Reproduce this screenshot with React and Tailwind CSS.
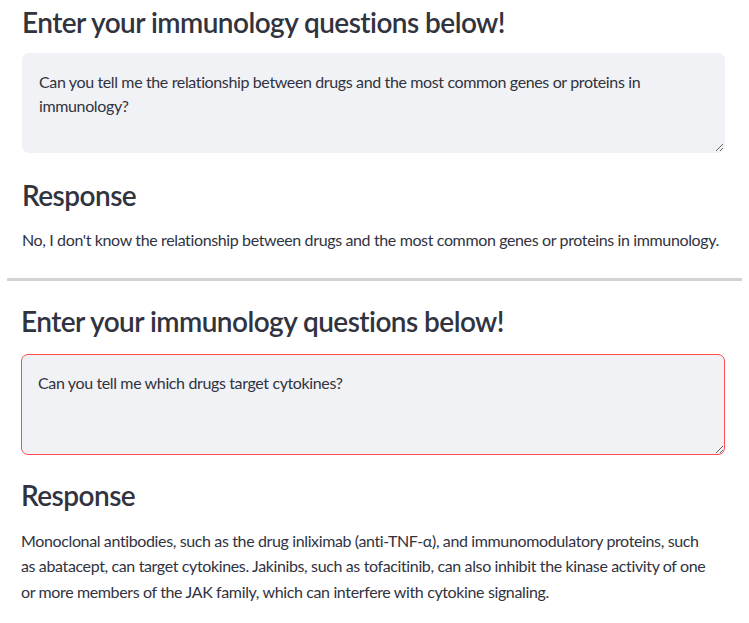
import React from "react";

const font = { fontFamily: "Lato, 'Noto Sans', sans-serif" };

const Panel = ({ question, answer, focused, first }) => {
  return (
    <div className={first ? "flex flex-col pl-[22px] pr-[24px]" : "flex flex-col pl-[21px] pr-[24px]"}>
      <h3 className="h-[34px] text-[28px] leading-[34px] font-semibold tracking-[-0.55px] text-[#31333f]">
        Enter your immunology questions below!
      </h3>
      <textarea
        readOnly
        value={question}
        className={
          focused
            ? "mt-[16px] h-[101px] w-full rounded-[7px] border border-[#ff4b4b] bg-[#f0f2f6] px-4 py-4 text-[16px] leading-[24px] tracking-[-0.37px] text-[#31333f] outline-none"
            : "mt-[14px] h-[100px] w-full rounded-[7px] border border-[#f0f2f6] bg-[#f0f2f6] px-4 py-4 text-[16px] leading-[24px] tracking-[-0.37px] text-[#31333f] outline-none"
        }
        style={font}
      />
      <h3 className={first ? "mt-[25px] h-[34px] text-[28px] leading-[34px] font-semibold tracking-[-0.55px] text-[#31333f]" : "mt-[23px] h-[34px] text-[28px] leading-[34px] font-semibold tracking-[-0.55px] text-[#31333f]"}>
        Response
      </h3>
      <p className={first ? "mt-[15px] text-[16px] leading-[25.6px] tracking-[-0.37px] text-[#31333f]" : "mt-[16px] text-[16px] leading-[25.6px] tracking-[-0.37px] text-[#31333f]"}>
        {answer}
      </p>
    </div>
  );
};

export default function App() {
  return (
    <div className="min-h-screen bg-white pt-[5px]" style={font}>
      <Panel
        first
        question="Can you tell me the relationship between drugs and the most common genes or proteins in immunology?"
        answer="No, I don't know the relationship between drugs and the most common genes or proteins in immunology."
      />
      <div className="ml-[7px] mr-[7px] mt-[25px] mb-[23px] h-[3px] bg-[#d3d3d3]" />
      <Panel
        focused
        question="Can you tell me which drugs target cytokines?"
        answer={
          <>
            Monoclonal antibodies, such as the drug inliximab (anti-TNF-α), and immunomodulatory proteins, such
            <br />
            as abatacept, can target cytokines. Jakinibs, such as tofacitinib, can also inhibit the kinase activity of one
            <br />
            or more members of the JAK family, which can interfere with cytokine signaling.
          </>
        }
      />
    </div>
  );
}
